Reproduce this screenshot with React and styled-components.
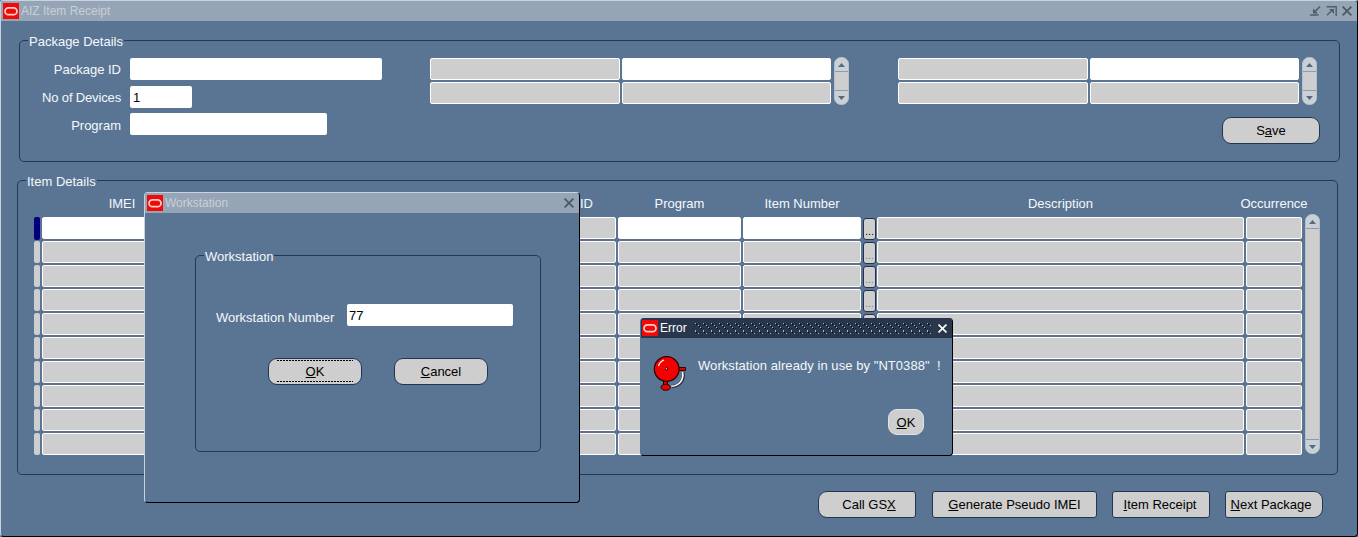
import React from "react";
import styled, { createGlobalStyle, css } from "styled-components";

const C = {
  canvas: "#5a7593",
  bar: "#95a5b5",
  light: "#c6d3e0",
  line: "#223a58",
  cell: "#cecece",
  gap: "#62718a",
};

const Global = createGlobalStyle`
  html, body { margin: 0; padding: 0; overflow: hidden; background: ${C.canvas}; }
  body, input, button {
    font-family: "Liberation Sans", Arial, sans-serif;
    font-size: 13px;
    line-height: 15px;
  }
  * { box-sizing: border-box; }
`;

const Window = styled.main`
  width: 1358px;
  height: 537px;
  display: flex;
  flex-direction: column;
  background: ${C.canvas};
  border: 1px solid #000;
  border-top-color: ${C.light};
  border-left-color: ${C.light};
  border-radius: 3px 3px 4px 4px;
  color: #f4f8fc;
`;

const TitleBar = styled.header`
  height: 20px;
  flex: none;
  display: flex;
  align-items: center;
  padding: 0 ${(p) => p.$right ?? 5}px 0 ${(p) => (p.$active ? 1 : 2)}px;
  background: ${(p) => (p.$active ? "#29374d" : C.bar)};
  color: ${(p) => (p.$active ? "#ffffff" : "#c9d0d7")};
  border-radius: 3px 3px 0 0;
`;

const TitleText = styled.span`
  margin-left: 2px;
  padding-top: 1px;
  font-size: 12px;
  white-space: nowrap;
`;

const TitleActions = styled.div`
  display: flex;
  gap: 5px;
  margin-left: auto;
`;

const Group = styled.fieldset`
  min-width: 0;
  width: ${(p) => p.$w}px;
  height: ${(p) => p.$h}px;
  margin: ${(p) => p.$m};
  padding: 0;
  border: 1px solid ${C.line};
  border-radius: 5px;
`;

const Legend = styled.legend`
  height: 13px;
  margin-left: 8px;
  padding: 0 1px;
  line-height: 15px;
  white-space: nowrap;
`;

const PackageBody = styled.div`
  display: flex;
  align-items: flex-start;
  padding-top: 11px;
`;

const Labels = styled.div`
  width: 101px;
  flex: none;
  display: flex;
  flex-direction: column;
  align-items: flex-end;
  gap: 13px;
  padding-top: 4px;
  margin-right: 9px;
`;

const Snug = styled.span`
  letter-spacing: -0.15px;
`;

const Fields = styled.div`
  width: 300px;
  flex: none;
  display: grid;
  grid-template-rows: 22px 22px 22px;
  row-gap: 5.5px;
`;

const Field = styled.input`
  width: ${(p) => p.$w}px;
  height: 22px;
  padding: ${(p) => p.$drop ?? 0}px 0 0 ${(p) => p.$pad ?? 3}px;
  border: 0;
  border-radius: 2px;
  outline: 0;
  background: #fff;
  color: #000;
`;

const MiniBlock = styled.div`
  flex: none;
  display: flex;
  align-items: flex-start;
  margin-right: 49px;
`;

const MiniGrid = styled.div`
  display: grid;
  grid-template-columns: 190px 209px;
  grid-auto-rows: 22px;
  gap: 2px;
  margin-right: 3px;
`;

const Cell = styled.div`
  height: 22px;
  border: 1px solid #fff;
  border-radius: 2px;
  background: ${(p) => (p.$open ? "#fff" : C.cell)};
  ${(p) => p.$ruled && css`box-shadow: 0 2px 0 ${C.gap};`}
`;

const ScrollTrack = styled.div`
  width: 15px;
  height: ${(p) => p.$h}px;
  margin-top: ${(p) => p.$top}px;
  display: flex;
  flex-direction: column;
  justify-content: space-between;
  border: 1px solid #b3bfca;
  border-radius: 7px;
  background: ${C.cell};
  overflow: hidden;
`;

const ScrollEnd = styled.div`
  height: 14px;
  display: grid;
  place-items: center;
  background: #c9d0d8;
  border: 0 solid #8d9cab;
  border-width: ${(p) => (p.$down ? "1px 0 0" : "0 0 1px")};
`;

const Button = styled.button`
  width: ${(p) => p.$w}px;
  height: ${(p) => p.$h ?? 27}px;
  display: flex;
  align-items: center;
  justify-content: center;
  padding: 0 ${(p) => p.$shift ?? 0}px 0 ${(p) => p.$nudge ?? 0}px;
  margin-right: ${(p) => p.$after ?? 0}px;
  border: 1px solid ${(p) => (p.$plain ? "#dfe3e6" : "#24364e")};
  border-radius: ${(p) => p.$r ?? "9px"};
  background: ${C.cell};
  color: #000;
  white-space: nowrap;
`;

const Key = styled.span`
  text-decoration: underline;
  text-decoration-thickness: 1px;
  text-underline-offset: 1px;
  text-decoration-skip-ink: none;
`;

const FocusRing = styled.span`
  width: 76px;
  height: 22px;
  display: grid;
  place-items: center;
  padding-top: 1px;
  margin-bottom: 1px;
  background:
    repeating-linear-gradient(90deg, #000 0 2px, transparent 2px 3px) top / 100% 1px no-repeat,
    repeating-linear-gradient(90deg, #000 0 2px, transparent 2px 3px) bottom / 100% 1px no-repeat;
`;

const SaveRow = styled.div`
  display: flex;
  justify-content: flex-end;
  padding-right: 19px;
  margin-top: -18px;
`;

const ItemBody = styled.div`
  display: flex;
  padding-left: 16px;
`;

const Table = styled.div`
  width: 1268px;
  flex: none;
  margin-right: 3px;
`;

const columns = css`
  display: grid;
  grid-template-columns: 6px 160px 176px 173px 59px 123px 118px 12px 367px 56px;
  column-gap: 2px;
`;

const HeadRow = styled.div`
  ${columns}
  height: 30px;
  padding-top: 9px;
`;

const HeadCell = styled.div`
  display: flex;
  justify-content: center;
  white-space: nowrap;
`;

const Row = styled.div`
  ${columns}
  height: 24px;
`;

const Marker = styled.div`
  height: ${(p) => (p.$current ? 23 : 22)}px;
  border-radius: 2px;
  background: ${(p) => (p.$current ? "#00007f" : C.cell)};
  ${(p) => p.$ruled && css`box-shadow: 0 2px 0 ${C.gap};`}
`;

const Lookup = styled.div`
  width: 13px;
  height: 22px;
  margin-top: 1px;
  padding-top: 6px;
  border: 1px solid #24344c;
  border-radius: 3px;
  background: ${C.cell};
  color: ${(p) => (p.$on ? "#111" : "#7d8792")};
  font-size: 11px;
  line-height: 12px;
  text-align: center;
`;

const Footer = styled.footer`
  display: flex;
  justify-content: flex-end;
  gap: 15px;
  padding: 16px 34px 0 0;
`;

const Dialog = styled.section`
  position: absolute;
  left: ${(p) => p.$x}px;
  top: ${(p) => p.$y}px;
  width: ${(p) => p.$w}px;
  height: ${(p) => p.$h}px;
  background: ${C.canvas};
  border: 1px solid #000;
  border-top: ${(p) => (p.$alert ? "0" : `1px solid ${C.light}`)};
  border-left-color: ${(p) => (p.$alert ? C.canvas : C.light)};
  border-radius: 4px;
  color: #f4f8fc;
`;

const FormLine = styled.div`
  display: flex;
  padding: 42px 0 0 20px;
`;

const FormLabel = styled.label`
  width: 131px;
  padding-top: 6px;
  white-space: nowrap;
`;

const DialogButtons = styled.div`
  display: flex;
  gap: 32px;
  padding: 32px 0 0 72px;
`;

const AlertBody = styled.div`
  display: flex;
  padding: 17px 0 0 12px;
`;

const Message = styled.p`
  margin: 3px 0 0 11px;
  letter-spacing: 0.06px;
  white-space: pre;
`;

const AlertFooter = styled.div`
  display: flex;
  justify-content: flex-end;
  padding: 17px 28px 0 0;
`;

const Grip = styled.svg`
  margin-left: 8px;
`;

const Logo = () => (
  <svg width="16" height="16" viewBox="0 0 16 16">
    <rect width="16" height="16" fill="#f00a0a" />
    <rect x="2" y="4.8" width="12" height="6.8" rx="3.4" fill="none" stroke="#ffd0cb" strokeWidth="1.7" />
  </svg>
);

const CloseIcon = ({ color = "#4c5a60", size = 10 }) => (
  <svg width={size} height={size} viewBox="0 0 10 10">
    <path d="M.6.6 9.400 9.400M9.400.6.6 9.400" stroke={color} strokeWidth="1.800" fill="none" />
  </svg>
);

const MinimizeIcon = () => (
  <svg width="11" height="10" viewBox="0 0 11 10">
    <path d="M10 .5 5 5.500M0 9h8.500" stroke="#4f5f66" strokeWidth="1.600" fill="none" />
    <path d="M3 2.500v5h5z" fill="#4f5f66" />
  </svg>
);

const MaximizeIcon = () => (
  <svg width="11" height="10" viewBox="0 0 11 10">
    <path d="M.5 .8H10.200V10M1 9.200 5 5.200" stroke="#4f5f66" strokeWidth="1.400" fill="none" />
    <path d="M3 3h5v5z" fill="#4f5f66" />
  </svg>
);

const Arrow = ({ down }) => (
  <svg width="7" height="4" viewBox="0 0 7 4">
    <path d={down ? "M0 0h7L3.500 4z" : "M0 4h7L3.500 0z"} fill="#566b7c" />
  </svg>
);

const BellIcon = () => (
  <svg width="34" height="37" viewBox="0 0 34 37">
    <path d="M30 17c1.500 7-2 14-11 14.500" fill="none" stroke="#27313c" strokeWidth="3" />
    <path d="M29.500 17c1.500 7-2.500 14-11 14.300" fill="none" stroke="#fff" strokeWidth="1.600" />
    <path d="M10.500 25h4v6h-4z" fill="#c00" stroke="#000" />
    <path d="M25 12.500h7.500v3H25z" fill="#e00000" stroke="#300" />
    <circle cx="13.700" cy="14" r="12.400" fill="#f40000" stroke="#200" strokeWidth="1.200" />
    <path d="M5.500 11c.8-3 2.800-5 5.500-6" fill="none" stroke="#fff" strokeWidth="1.200" />
    <circle cx="13.700" cy="14" r="1.400" fill="#400" />
    <circle cx="13.400" cy="13.700" r=".7" fill="#fcc" />
    <ellipse cx="12.700" cy="32.300" rx="4.600" ry="2.900" fill="#e80000" stroke="#200" />
  </svg>
);

const Dots = () => (
  <Grip width="236" height="11">
    <defs>
      <pattern id="grip" width="8" height="8" patternUnits="userSpaceOnUse">
        <path d="M0 0h1v1H0zM3 2h1v1H3zM5 4h1v1H5zM0 7h1v1H0z" fill="#a3b6c8" />
        <path d="M1 1h1v1H1zM4 3h1v1H4zM6 5h1v1H6z" fill="#000" />
      </pattern>
    </defs>
    <rect width="236" height="11" fill="url(#grip)" />
  </Grip>
);

const Scrollbar = ({ height, top = 0 }) => (
  <ScrollTrack $h={height} $top={top}>
    <ScrollEnd><Arrow /></ScrollEnd>
    <ScrollEnd $down><Arrow down /></ScrollEnd>
  </ScrollTrack>
);

const PairGrid = () => (
  <MiniBlock>
    <MiniGrid>
      <Cell />
      <Cell $open />
      <Cell />
      <Cell />
    </MiniGrid>
    <Scrollbar height={48} top={-1} />
  </MiniBlock>
);

const HEADS = ["", "IMEI", "", "", "ID", "Program", "Item Number", "", "Description", "Occurrence"];

const ItemRow = ({ first, last, lookup }) => (
  <Row>
    <Marker $current={first} $ruled={!last && !first} />
    <Cell $open={first} $ruled={!last} />
    <Cell $ruled={!last} />
    <Cell $ruled={!last} />
    <Cell $ruled={!last} />
    <Cell $open={first} $ruled={!last} />
    <Cell $open={first} $ruled={!last} />
    <Lookup $on={first}>{lookup && "..."}</Lookup>
    <Cell $ruled={!last} />
    <Cell $ruled={!last} />
  </Row>
);

export default function App() {
  return (
    <>
      <Global />
      <Window>
        <TitleBar>
          <Logo />
          <TitleText>AIZ Item Receipt</TitleText>
          <TitleActions>
            <MinimizeIcon />
            <MaximizeIcon />
            <CloseIcon />
          </TitleActions>
        </TitleBar>

        <Group $w={1321} $h={128} $m="13px 0 0 18px">
          <Legend>Package Details</Legend>
          <PackageBody>
            <Labels>
              <span>Package ID</span>
              <Snug>No of Devices</Snug>
              <span>Program</span>
            </Labels>
            <Fields>
              <Field $w={252} />
              <Field $w={62} $drop={1} defaultValue="1" />
              <Field $w={197} />
            </Fields>
            <PairGrid />
            <PairGrid />
          </PackageBody>
          <SaveRow>
            <Button $w={98}>S<Key>a</Key>ve</Button>
          </SaveRow>
        </Group>

        <Group $w={1321} $h={301} $m="12px 0 0 16px">
          <Legend>Item Details</Legend>
          <ItemBody>
            <Table>
              <HeadRow>
                {HEADS.map((h, i) => <HeadCell key={i}>{h}</HeadCell>)}
              </HeadRow>
              {Array.from({ length: 10 }, (_, i) => (
                <ItemRow key={i} first={i === 0} last={i === 9} lookup={i < 4} />
              ))}
            </Table>
            <Scrollbar height={240} top={27} />
          </ItemBody>
        </Group>

        <Footer>
          <Button $w={98} $r="9px 3px 3px 9px" $nudge={4} $after={1}>Call GS<Key>X</Key></Button>
          <Button $w={165} $r="3px"><Key>G</Key>enerate Pseudo IMEI</Button>
          <Button $w={98} $r="3px" $shift={2}><Key>I</Key>tem Receipt</Button>
          <Button $w={98} $r="3px 9px 9px 3px" $shift={6}><Key>N</Key>ext Package</Button>
        </Footer>
      </Window>

      <Dialog $x={144} $y={192} $w={436} $h={311}>
        <TitleBar $right={5}>
          <Logo />
          <TitleText>Workstation</TitleText>
          <TitleActions><CloseIcon /></TitleActions>
        </TitleBar>
        <Group $w={346} $h={203} $m="36px 0 0 50px">
          <Legend>Workstation</Legend>
          <FormLine>
            <FormLabel>Workstation Number</FormLabel>
            <Field $w={166} $pad={2} $drop={1} defaultValue="77" />
          </FormLine>
          <DialogButtons>
            <Button $w={94}><FocusRing><span><Key>O</Key>K</span></FocusRing></Button>
            <Button $w={94}><Key>C</Key>ancel</Button>
          </DialogButtons>
        </Group>
      </Dialog>

      <Dialog $alert $x={640} $y={318} $w={313} $h={138}>
        <TitleBar $active $right={5}>
          <Logo />
          <TitleText>Error</TitleText>
          <Dots />
          <TitleActions><CloseIcon color="#fff" size={9} /></TitleActions>
        </TitleBar>
        <AlertBody>
          <BellIcon />
          <Message>{'Workstation already in use by "NT0388"  !'}</Message>
        </AlertBody>
        <AlertFooter>
          <Button $plain $w={36} $h={26}><span><Key>O</Key>K</span></Button>
        </AlertFooter>
      </Dialog>
    </>
  );
}
